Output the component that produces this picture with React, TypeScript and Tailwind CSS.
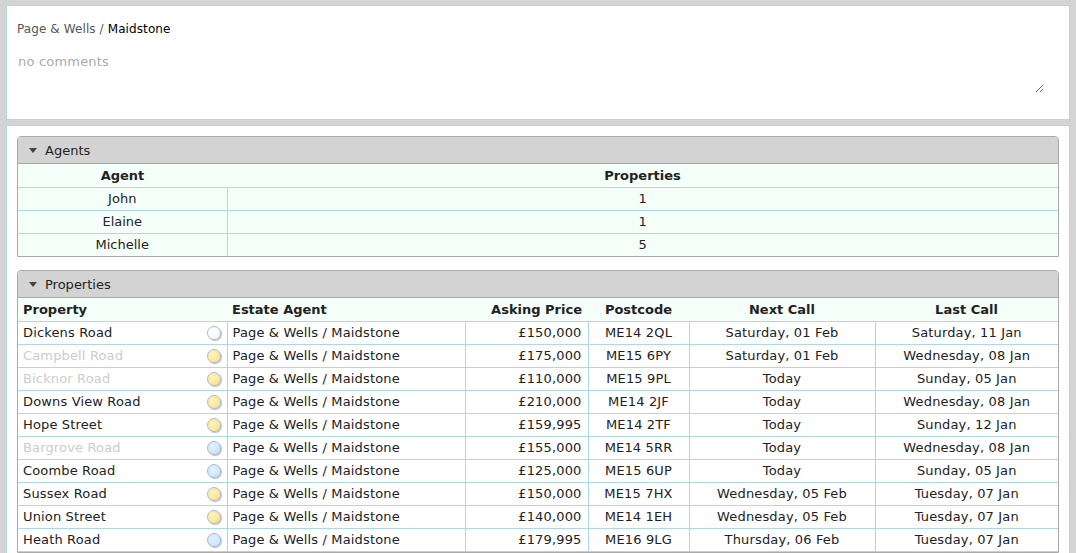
import React from 'react';

type Dot = 'white' | 'yellow' | 'blue';

interface Property {
  name: string;
  faded?: boolean;
  dot: Dot;
  price: string;
  postcode: string;
  next: string;
  last: string;
}

const agents = [
  { name: 'John', count: 1 },
  { name: 'Elaine', count: 1 },
  { name: 'Michelle', count: 5 },
];

const properties: Property[] = [
  { name: 'Dickens Road', dot: 'white', price: '£150,000', postcode: 'ME14 2QL', next: 'Saturday, 01 Feb', last: 'Saturday, 11 Jan' },
  { name: 'Campbell Road', faded: true, dot: 'yellow', price: '£175,000', postcode: 'ME15 6PY', next: 'Saturday, 01 Feb', last: 'Wednesday, 08 Jan' },
  { name: 'Bicknor Road', faded: true, dot: 'yellow', price: '£110,000', postcode: 'ME15 9PL', next: 'Today', last: 'Sunday, 05 Jan' },
  { name: 'Downs View Road', dot: 'yellow', price: '£210,000', postcode: 'ME14 2JF', next: 'Today', last: 'Wednesday, 08 Jan' },
  { name: 'Hope Street', dot: 'yellow', price: '£159,995', postcode: 'ME14 2TF', next: 'Today', last: 'Sunday, 12 Jan' },
  { name: 'Bargrove Road', faded: true, dot: 'blue', price: '£155,000', postcode: 'ME14 5RR', next: 'Today', last: 'Wednesday, 08 Jan' },
  { name: 'Coombe Road', dot: 'blue', price: '£125,000', postcode: 'ME15 6UP', next: 'Today', last: 'Sunday, 05 Jan' },
  { name: 'Sussex Road', dot: 'yellow', price: '£150,000', postcode: 'ME15 7HX', next: 'Wednesday, 05 Feb', last: 'Tuesday, 07 Jan' },
  { name: 'Union Street', dot: 'yellow', price: '£140,000', postcode: 'ME14 1EH', next: 'Wednesday, 05 Feb', last: 'Tuesday, 07 Jan' },
  { name: 'Heath Road', dot: 'blue', price: '£179,995', postcode: 'ME16 9LG', next: 'Thursday, 06 Feb', last: 'Tuesday, 07 Jan' },
];

const dotClass: Record<Dot, string> = {
  white: 'bg-[radial-gradient(circle_at_40%_35%,#ffffff,#f2f6fa)]',
  yellow: 'bg-[radial-gradient(circle_at_40%_35%,#fff3b8,#f8e08a)]',
  blue: 'bg-[radial-gradient(circle_at_40%_35%,#e2f3ff,#bfe0f8)]',
};

const StatusDot: React.FC<{ kind: Dot }> = ({ kind }) => (
  <span
    className={`inline-block w-[14px] h-[14px] rounded-full border border-[#a9bccc] shadow-[1px_1px_1px_rgba(0,0,0,0.28)] ${dotClass[kind]}`}
  />
);

const Section: React.FC<{ title: string; children: React.ReactNode }> = ({ title, children }) => (
  <div className="border border-[#aaaaaa] rounded-t-[4px] overflow-hidden">
    <div className="h-[27px] bg-[#d3d3d3] border-b border-[#aaaaaa] flex items-center pl-[11px] pt-[1px] text-[13px] text-[#222]">
      <svg width="8" height="5" viewBox="0 0 8 5" className="mr-[8px]">
        <path d="M0 0 L8 0 L4 5 Z" fill="#444" />
      </svg>
      {title}
    </div>
    {children}
  </div>
);

const App: React.FC = () => {
  return (
    <div className="min-h-screen bg-[#d4d4d4] px-[6px] pt-[5px] font-['DejaVu_Sans',Verdana,sans-serif] text-[#222]">
      {/* comment panel */}
      <div className="bg-white border border-[#add8e6] h-[115px] px-[10px] pt-[15px]">
        <div className="text-[12px] leading-[16px] tracking-[0.1px]">
          <span className="text-[#555]">Page &amp; Wells / </span>
          <span className="text-black">Maidstone</span>
        </div>
        <textarea
          placeholder="no comments"
          className="block mt-[15px] w-[1028px] h-[41px] ml-[-1px] px-[2px] py-[2px] text-[13px] leading-[16px] tracking-[0.2px] outline-none border-0 placeholder:text-[#aaaaaa] font-['DejaVu_Sans',Verdana,sans-serif]"
        />
      </div>

      {/* lists panel */}
      <div className="mt-[5px] bg-white border border-[#add8e6] p-[10px] pb-0 flex flex-col gap-[13px]">
        <Section title="Agents">
          <table className="w-full table-fixed border-collapse bg-[#f5fffa] text-[13px]">
            <colgroup>
              <col className="w-[209px]" />
              <col />
            </colgroup>
            <thead>
              <tr className="h-[23px] border-b border-[#add8e6]">
                <th className="font-bold text-center">Agent</th>
                <th className="font-bold text-center">Properties</th>
              </tr>
            </thead>
            <tbody>
              {agents.map((a, i) => (
                <tr key={a.name} className={`h-[23px] ${i < agents.length - 1 ? 'border-b border-[#add8e6]' : ''}`}>
                  <td className="text-center border-r border-[#add8e6]">{a.name}</td>
                  <td className="text-center">{a.count}</td>
                </tr>
              ))}
            </tbody>
          </table>
        </Section>

        <Section title="Properties">
          <table className="w-full table-fixed border-collapse text-[13px] tracking-[0.15px]">
            <colgroup>
              <col className="w-[209px]" />
              <col className="w-[238px]" />
              <col className="w-[123px]" />
              <col className="w-[101px]" />
              <col className="w-[186px]" />
              <col />
            </colgroup>
            <thead>
              <tr className="h-[23px] bg-[#f5fffa] border-b border-[#add8e6] tracking-normal">
                <th className="font-bold text-left pl-[5px]">Property</th>
                <th className="font-bold text-left pl-[5px]">Estate Agent</th>
                <th className="font-bold text-right pr-[6px]">Asking Price</th>
                <th className="font-bold text-center">Postcode</th>
                <th className="font-bold text-center">Next Call</th>
                <th className="font-bold text-center">Last Call</th>
              </tr>
            </thead>
            <tbody>
              {properties.map((p) => (
                <tr key={p.name} className="h-[23px] border-b border-[#add8e6]">
                  <td className="border-r border-[#add8e6] pl-[5px] pr-[6px]">
                    <div className="flex items-center justify-between">
                      <span className={p.faded ? 'text-[#cccccc]' : ''}>{p.name}</span>
                      <StatusDot kind={p.dot} />
                    </div>
                  </td>
                  <td className="border-r border-[#add8e6] pl-[5px] whitespace-nowrap">Page &amp; Wells / Maidstone</td>
                  <td className="border-r border-[#add8e6] text-right pr-[6px]">{p.price}</td>
                  <td className="border-r border-[#add8e6] text-center">{p.postcode}</td>
                  <td className="border-r border-[#add8e6] text-center">{p.next}</td>
                  <td className="text-center">{p.last}</td>
                </tr>
              ))}
            </tbody>
          </table>
        </Section>
      </div>
    </div>
  );
};

export default App;
